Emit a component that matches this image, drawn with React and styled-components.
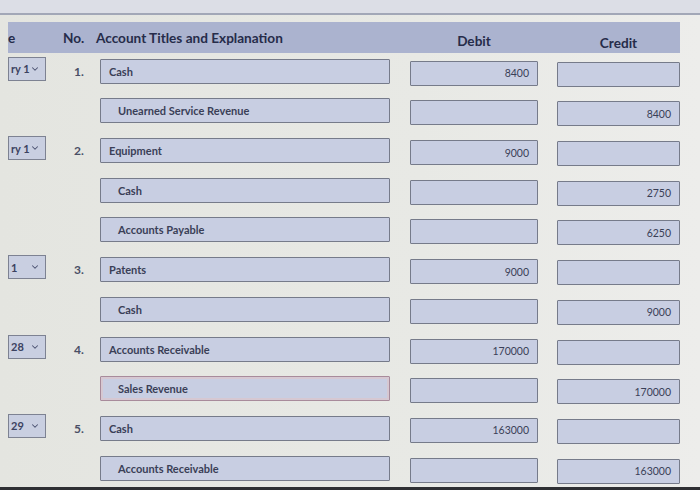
import React from 'react'
import styled, { createGlobalStyle } from 'styled-components'
import { ChevronDown } from 'lucide-react'

const GlobalStyle = createGlobalStyle`
  html, body {
    margin: 0;
    padding: 0;
    background: #e6e7e2;
    font-family: Lato, "Open Sans", sans-serif;
  }
`

const rows = [
  { date: 'ry 1', no: '1.', title: 'Cash', debit: '8400' },
  { title: 'Unearned Service Revenue', credit: '8400', indent: true },
  { date: 'ry 1', no: '2.', title: 'Equipment', debit: '9000' },
  { title: 'Cash', credit: '2750', indent: true },
  { title: 'Accounts Payable', credit: '6250', indent: true },
  { date: '1', no: '3.', title: 'Patents', debit: '9000' },
  { title: 'Cash', credit: '9000', indent: true },
  { date: '28', no: '4.', title: 'Accounts Receivable', debit: '170000' },
  { title: 'Sales Revenue', credit: '170000', indent: true, flagged: true },
  { date: '29', no: '5.', title: 'Cash', debit: '163000' },
  { title: 'Accounts Receivable', credit: '163000', indent: true },
]

function App() {
  return (
    <Page>
      <GlobalStyle />
      <TopStrip />
      <Table>
        <HeaderRow>
          <HeadCell>e</HeadCell>
          <HeadCell $pad={17}>No.</HeadCell>
          <HeadCell $pad={-4}>Account Titles and Explanation</HeadCell>
          <HeadCell $align="center" $down={3}>Debit</HeadCell>
          <HeadCell $align="center" $down={5}>Credit</HeadCell>
        </HeaderRow>
        {rows.map((r, i) => (
          <Row key={i}>
            {r.date ? (
              <Select>
                <span>{r.date}</span>
                <ChevronDown size={10} strokeWidth={2.5} color="#4a5070" />
              </Select>
            ) : (
              <span />
            )}
            <Num>{r.no}</Num>
            <Field $indent={r.indent} $flagged={r.flagged}>{r.title}</Field>
            <Field $amount $down={2}>{r.debit}</Field>
            <Field $amount $down={3}>{r.credit}</Field>
          </Row>
        ))}
      </Table>
      <BottomEdge />
    </Page>
  )
}

export default App

const Page = styled.div`
  width: 700px;
  height: 490px;
  overflow: hidden;
  position: relative;
  display: flex;
  flex-direction: column;
  background: linear-gradient(90deg, #e4e5e0 0%, #e8e9e5 60%, #ededeb 100%);
`

const TopStrip = styled.div`
  height: 13px;
  background: #dcdee6;
  border-bottom: 2px solid #a2a7b7;
  margin-bottom: 7px;
  flex-shrink: 0;
`

const Table = styled.div`
  width: 672px;
  margin-left: 8px;
  display: flex;
  flex-direction: column;
  gap: 14.7px;
`

/* date | no. | account | gap+debit | gap+credit */
const cols = '38px 54px 290px 148px 142px'

const HeaderRow = styled.div`
  display: grid;
  grid-template-columns: ${cols};
  height: 31px;
  align-items: center;
  background: #abb3cf;
  margin-bottom: -9px;
  & > :nth-child(4) { margin-left: 20px; }
  & > :nth-child(5) { margin-left: 19px; }
`

const HeadCell = styled.div`
  font-family: Lato, "Open Sans", sans-serif;
  font-weight: 700;
  font-size: 13.6px;
  color: #262c4a;
  text-align: ${p => p.$align || 'left'};
  margin-left: ${p => p.$pad || 0}px;
  position: relative;
  top: ${p => p.$down || 0}px;
  white-space: nowrap;
`

const Row = styled.div`
  display: grid;
  grid-template-columns: ${cols};
  height: 25px;
  align-items: stretch;
  & > :nth-child(4) { margin-left: 20px; }
  & > :nth-child(5) { margin-left: 19px; }
`

const Select = styled.div`
  display: flex;
  align-items: center;
  justify-content: space-between;
  padding: 0 5px 0 2px;
  margin-top: -2px;
  height: 24px;
  background: #c9cfe1;
  border: 1px solid #7d8292;
  box-sizing: border-box;
  font-size: 11px;
  font-weight: 700;
  color: #3c4260;
`

const Num = styled.div`
  display: flex;
  align-items: center;
  padding-left: 28px;
  font-size: 12px;
  font-weight: 700;
  color: #4a4f66;
`

const Field = styled.div`
  display: flex;
  align-items: center;
  justify-content: ${p => (p.$amount ? 'flex-end' : 'flex-start')};
  box-sizing: border-box;
  padding: ${p => (p.$amount ? '0 8px 0 0' : p.$indent ? '0 0 0 17px' : '0 0 0 8px')};
  background: #c8cee2;
  border: 1px solid ${p => (p.$flagged ? '#a88b9b' : '#767b8a')};
  box-shadow: ${p => (p.$flagged ? 'inset 0 0 0 2px #d6c8d2' : 'none')};
  border-radius: 1px;
  position: relative;
  top: ${p => p.$down || 0}px;
  font-size: ${p => (p.$amount ? '10.5px' : '11px')};
  font-weight: ${p => (p.$amount ? 400 : 700)};
  color: #3a3f57;
  white-space: nowrap;
`

const BottomEdge = styled.div`
  position: absolute;
  left: 0;
  right: 0;
  bottom: 0;
  height: 3px;
  background: #2e2f33;
`
